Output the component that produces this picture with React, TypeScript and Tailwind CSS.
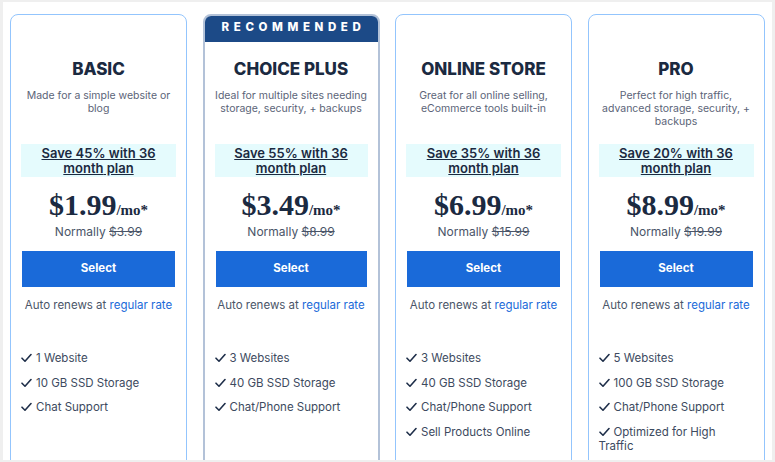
import React from "react";

type Plan = {
  name: string;
  desc: string;
  save: string;
  price: string;
  normal: string;
  features: string[];
  recommended?: boolean;
};

const plans: Plan[] = [
  {
    name: "BASIC",
    desc: "Made for a simple website or blog",
    save: "Save 45% with 36 month plan",
    price: "$1.99",
    normal: "$3.99",
    features: ["1 Website", "10 GB SSD Storage", "Chat Support"],
  },
  {
    name: "CHOICE PLUS",
    desc: "Ideal for multiple sites needing storage, security, + backups",
    save: "Save 55% with 36 month plan",
    price: "$3.49",
    normal: "$8.99",
    features: ["3 Websites", "40 GB SSD Storage", "Chat/Phone Support"],
    recommended: true,
  },
  {
    name: "ONLINE STORE",
    desc: "Great for all online selling, eCommerce tools built-in",
    save: "Save 35% with 36 month plan",
    price: "$6.99",
    normal: "$15.99",
    features: ["3 Websites", "40 GB SSD Storage", "Chat/Phone Support", "Sell Products Online"],
  },
  {
    name: "PRO",
    desc: "Perfect for high traffic, advanced storage, security, + backups",
    save: "Save 20% with 36 month plan",
    price: "$8.99",
    normal: "$19.99",
    features: ["5 Websites", "100 GB SSD Storage", "Chat/Phone Support", "Optimized for High Traffic"],
  },
];

const sans = { fontFamily: "Inter, 'Noto Sans', sans-serif" };
const serif = { fontFamily: "'Liberation Serif', 'Times New Roman', serif" };

function Check() {
  return (
    <svg width="11" height="10" viewBox="0 0 11 10" className="inline-block mr-[4px] align-[-1px]">
      <path d="M1 5.2 L4 8.2 L10 1.5" fill="none" stroke="#1f2f4a" strokeWidth="1.6" strokeLinecap="round" strokeLinejoin="round" />
    </svg>
  );
}

function Card({ p }: { p: Plan }) {
  const [line1, line2] = p.save.split(" month");
  return (
    <div
      className={`w-[177px] h-[470px] shrink-0 rounded-[8px] bg-white overflow-hidden flex flex-col ${
        p.recommended ? "border-2 border-[#b3c2d8]" : "border border-[#93c5fd]"
      }`}
    >
      {p.recommended ? (
        <div className="h-[28px] -mx-[2px] -mt-[2px] bg-[#1c4a87] flex items-center justify-center text-white text-[11.5px] font-extrabold tracking-[0.4em] pl-[5px]">
          RECOMMENDED
        </div>
      ) : (
        <div className="h-[27px]" />
      )}
      <div className="px-[10px] flex flex-col">
        <h2 className="mt-[17px] text-[17px] leading-[20px] font-extrabold text-[#1b2a41] text-center">{p.name}</h2>
        <p className="mt-[10px] h-[40px] text-[10.5px] leading-[13px] text-[#5b6478] text-center">{p.desc}</p>
        <div className="mt-[15px] h-[33px] bg-[#e5fbfd] flex flex-col items-center justify-center text-[13px] leading-[15px] font-semibold text-[#1b2a41] underline">
          <span>{line1}</span>
          <span>month{line2}</span>
        </div>
        <div className="mt-[13px] h-[30px] flex items-baseline justify-center text-[#1b2a41] font-bold" style={serif}>
          <span className="text-[30px] leading-[30px]">{p.price}</span>
          <span className="text-[15px] leading-[30px]">/mo*</span>
        </div>
        <div className="mt-[4px] text-[12px] leading-[16px] text-[#4a5568] text-center">
          Normally <span className="line-through">{p.normal}</span>
        </div>
        <button className="mt-[11px] mx-[1px] h-[36px] bg-[#1a6ad9] text-white text-[11.5px] font-bold">Select</button>
        <div className="mt-[10px] text-[11.5px] leading-[16px] text-[#4a5568] text-center">
          Auto renews at <span className="text-[#1a6ad9]">regular rate</span>
        </div>
        <ul className="mt-[38px] flex flex-col gap-[10.5px] text-[11.5px] leading-[14px] text-[#3d4a60]">
          {p.features.map((f) => (
            <li key={f}>
              <Check />
              {f}
            </li>
          ))}
        </ul>
      </div>
    </div>
  );
}

export default function App() {
  return (
    <div className="w-[775px] h-[462px] bg-[#efefef] pt-[2px] pl-[3px]" style={sans}>
      <div className="w-[769px] h-[458px] bg-white overflow-hidden flex gap-[15.5px] pl-[7px] pt-[12px]">
        {plans.map((p) => (
          <Card key={p.name} p={p} />
        ))}
      </div>
    </div>
  );
}
